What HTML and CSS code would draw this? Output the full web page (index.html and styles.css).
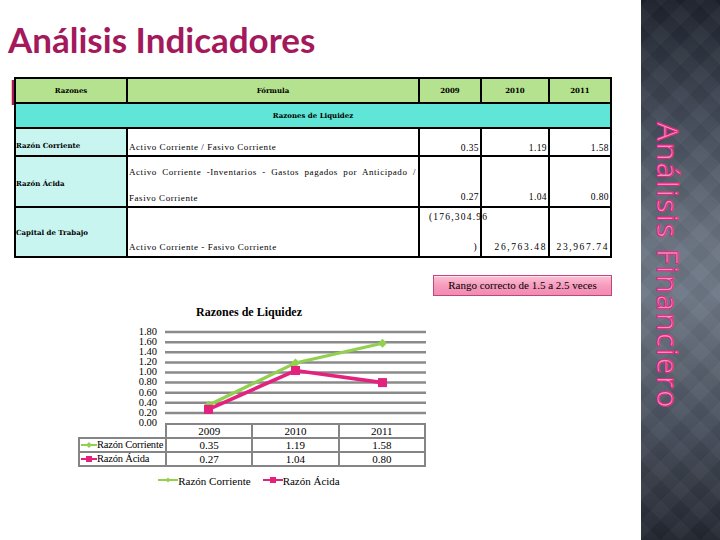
FILE: index.html
```html
<!DOCTYPE html>
<html lang="es">
<head>
<meta charset="utf-8">
<title>Análisis Indicadores Financieros</title>
<link rel="stylesheet" href="styles.css">
</head>
<body>
<div class="slide">
  <main class="content">
    <h1 class="title">Análisis Indicadores <span class="line2">Financieros</span></h1>
    <div class="table-wrap">
      <table class="ratios">
        <colgroup>
          <col class="c-name"><col class="c-formula"><col class="c-y1"><col class="c-y2"><col class="c-y3">
        </colgroup>
        <tr class="head"><th>Razones</th><th>Fórmula</th><th>2009</th><th>2010</th><th>2011</th></tr>
        <tr class="section"><th colspan="5">Razones de Liquidez</th></tr>
        <tr class="r1">
          <td class="name">Razón Corriente</td>
          <td class="formula">Activo Corriente / Fasivo Corriente</td>
          <td class="num">0.35</td><td class="num">1.19</td><td class="num">1.58</td>
        </tr>
        <tr class="r2">
          <td class="name">Razón Ácida</td>
          <td class="formula"><div class="just">Activo Corriente -Inventarios - Gastos pagados por Anticipado /</div><div class="second">Fasivo Corriente</div></td>
          <td class="num">0.27</td><td class="num">1.04</td><td class="num">0.80</td>
        </tr>
        <tr class="r3">
          <td class="name">Capital de Trabajo</td>
          <td class="formula">Activo Corriente - Fasivo Corriente</td>
          <td class="num split"><div class="neg">(176,304.96</div><div class="close">)</div></td>
          <td class="num wide">26,763.48</td><td class="num wide">23,967.74</td>
        </tr>
      </table>
    </div>
    <div class="note-row"><div class="note">Rango correcto de 1.5 a 2.5 veces</div></div>
    <section class="chart">
      <div class="chart-title">Razones de Liquidez</div>
      <div class="plot-row">
        <div class="ylabels">
          <span>1.80</span><span>1.60</span><span>1.40</span><span>1.20</span><span>1.00</span>
          <span>0.80</span><span>0.60</span><span>0.40</span><span>0.20</span><span>0.00</span>
        </div>
        <svg class="plot" width="261" height="96" viewBox="0 0 261 96">
          <g stroke="#8a8a8a" stroke-width="2.5">
            <line x1="0" y1="5.1" x2="261" y2="5.1"/>
            <line x1="0" y1="15.2" x2="261" y2="15.2"/>
            <line x1="0" y1="25.3" x2="261" y2="25.3"/>
            <line x1="0" y1="35.4" x2="261" y2="35.4"/>
            <line x1="0" y1="45.5" x2="261" y2="45.5"/>
            <line x1="0" y1="55.6" x2="261" y2="55.6"/>
            <line x1="0" y1="65.7" x2="261" y2="65.7"/>
            <line x1="0" y1="75.8" x2="261" y2="75.8"/>
            <line x1="0" y1="85.9" x2="261" y2="85.9"/>
          </g>
          <polyline points="43.5,78.3 130.5,35.9 217.5,16.2" fill="none" stroke="#92d050" stroke-width="3.2"/>
          <g fill="#92d050">
            <path d="M43.5 73.8 L48 78.3 L43.5 82.8 L39 78.3Z"/>
            <path d="M130.5 31.4 L135 35.9 L130.5 40.4 L126 35.9Z"/>
            <path d="M217.5 11.7 L222 16.2 L217.5 20.7 L213 16.2Z"/>
          </g>
          <polyline points="43.5,82.4 130.5,43.5 217.5,55.6" fill="none" stroke="#e3227d" stroke-width="3.6"/>
          <g fill="#e3227d">
            <rect x="39" y="77.9" width="9" height="9"/>
            <rect x="126" y="39" width="9" height="9"/>
            <rect x="213" y="51.1" width="9" height="9"/>
          </g>
        </svg>
      </div>
      <table class="data">
        <colgroup><col class="d-name"><col><col><col></colgroup>
        <tr class="years"><td class="blank"></td><td>2009</td><td>2010</td><td>2011</td></tr>
        <tr>
          <td class="series"><svg class="key" width="16" height="8" viewBox="0 0 16 8"><line x1="0" y1="4" x2="16" y2="4" stroke="#92d050" stroke-width="2"/><path d="M8 1 L11 4 L8 7 L5 4Z" fill="#92d050"/></svg>Razón Corriente</td>
          <td>0.35</td><td>1.19</td><td>1.58</td>
        </tr>
        <tr>
          <td class="series"><svg class="key" width="16" height="8" viewBox="0 0 16 8"><line x1="0" y1="4" x2="16" y2="4" stroke="#e3227d" stroke-width="2"/><rect x="5" y="1" width="6" height="6" fill="#e3227d"/></svg>Razón Ácida</td>
          <td>0.27</td><td>1.04</td><td>0.80</td>
        </tr>
      </table>
      <div class="legend">
        <span class="item"><svg class="key" width="20" height="8" viewBox="0 0 20 8"><line x1="0" y1="4" x2="20" y2="4" stroke="#92d050" stroke-width="2"/><path d="M10 1.5 L12.5 4 L10 6.5 L7.5 4Z" fill="#92d050"/></svg>Razón Corriente</span>
        <span class="item"><svg class="key" width="20" height="8" viewBox="0 0 20 8"><line x1="0" y1="4" x2="20" y2="4" stroke="#e3227d" stroke-width="2"/><rect x="7" y="1" width="6" height="6" fill="#e3227d"/></svg>Razón Ácida</span>
      </div>
    </section>
  </main>
  <aside class="side"><span class="side-title">Análisis Financiero</span></aside>
</div>
</body>
</html>
```

FILE: styles.css
```css
html, body {
  margin: 0;
  padding: 0;
  background: #ffffff;
}

.slide {
  display: flex;
  width: 720px;
  height: 540px;
  overflow: hidden;
}

.content {
  width: 641px;
  flex: none;
  padding-top: 16px;
  box-sizing: border-box;
}

.title {
  margin: 0;
  padding-left: 8px;
  width: 330px;
  height: 94px;
  font-family: Lato, "Open Sans", sans-serif;
  font-weight: 700;
  font-size: 35px;
  line-height: 47px;
  color: #a3195b;
}

.title .line2 {
  display: block;
  margin-top: 5px;
  margin-left: 1px;
}

.table-wrap {
  position: relative;
  margin: -33px 0 0 14px;
  width: 596px;
}

.ratios {
  border-collapse: collapse;
  table-layout: fixed;
  width: 596px;
  background: #ffffff;
}

.c-name { width: 112px; }
.c-formula { width: 292px; }
.c-y1 { width: 62px; }
.c-y2 { width: 68px; }
.c-y3 { width: 62px; }

.ratios th,
.ratios td {
  border: 2px solid #000000;
  padding: 0;
  vertical-align: top;
}

.ratios th {
  font-family: "DejaVu Serif", serif;
  font-weight: 700;
  font-size: 7px;
  line-height: 10px;
  color: #000000;
  text-align: center;
  vertical-align: middle;
}

.head { height: 25px; }
.head th { background: #b5e28e; }
.section { height: 25px; }
.section th { background: #5fe6d7; }

.r1 { height: 28px; }
.r2 { height: 51px; }
.r3 { height: 50px; }

.name {
  background: #c9f5f0;
  font-family: "DejaVu Serif", serif;
  font-weight: 700;
  font-size: 7px;
  line-height: 10px;
  white-space: nowrap;
}

.formula {
  font-family: "Liberation Serif", "Times New Roman", serif;
  font-size: 9px;
  line-height: 10px;
  letter-spacing: 0.55px;
  padding-left: 1px !important;
  white-space: nowrap;
}

.num {
  font-family: "Liberation Serif", "Times New Roman", serif;
  font-size: 9.5px;
  line-height: 10px;
  letter-spacing: 0.4px;
  text-align: right;
  padding-right: 1px !important;
  white-space: nowrap;
}

.num.wide { letter-spacing: 1.6px; }

.r1 .name { padding-top: 12px; }
.r1 .formula { padding-top: 13px; }
.r1 .num { padding-top: 14px; }

.r2 .name { padding-top: 22px; }
.r2 .formula { padding-top: 10px; padding-right: 2px; }
.r2 .num { padding-top: 35px; }

.just {
  text-align: justify;
  text-align-last: justify;
  white-space: normal;
  word-spacing: 2px;
}

.second { margin-top: 16px; }

.r3 .name { padding-top: 20px; }
.r3 .formula { padding-top: 34px; }
.r3 .num { padding-top: 34px; }
.r3 .num.split { padding-top: 4px; }

.neg {
  text-align: left;
  padding-left: 9px;
  letter-spacing: 1.2px;
}

.close {
  margin-top: 20px;
  padding-right: 2px;
}

.note-row {
  display: flex;
  justify-content: flex-end;
  padding-right: 29px;
  margin-top: 17px;
}

.note {
  width: 177px;
  height: 19px;
  border: 1px solid #c0457c;
  background: linear-gradient(to bottom, #fcc0d4 0%, #f69cbd 50%, #f28ab1 100%);
  font-family: "Liberation Serif", "Times New Roman", serif;
  font-size: 11px;
  line-height: 19px;
  text-align: center;
  color: #000000;
  box-shadow: inset 0 1px 0 rgba(255, 255, 255, 0.6);
}

.chart {
  margin-left: 78px;
  margin-top: 9px;
  width: 348px;
  font-family: "Liberation Serif", "Times New Roman", serif;
  color: #000000;
}

.chart-title {
  font-weight: 700;
  font-size: 12px;
  line-height: 14px;
  text-align: center;
  padding-right: 6px;
}

.plot-row {
  display: grid;
  grid-template-columns: 87px 261px;
  margin-top: 8px;
  height: 96px;
}

.ylabels {
  display: flex;
  flex-direction: column;
  align-items: flex-end;
  padding-right: 8px;
  height: 96px;
}

.ylabels span {
  display: block;
  height: 10.1px;
  line-height: 10.1px;
  font-size: 10.5px;
}

.plot {
  display: block;
  overflow: visible;
}

.data {
  border-collapse: collapse;
  table-layout: fixed;
  width: 348px;
  font-size: 11px;
}

.d-name { width: 87px; }

.data td {
  border: 2px solid #858585;
  padding: 0;
  height: 12px;
  line-height: 12px;
  text-align: center;
  white-space: nowrap;
}

.data .years td { height: 12px; }

.data td.blank {
  border: none;
}

.data td.series {
  text-align: left;
  padding-left: 1px;
  font-size: 10.5px;
  letter-spacing: -0.2px;
  overflow: hidden;
}

.key {
  display: inline-block;
  vertical-align: middle;
  margin-top: -2px;
}

.legend {
  display: flex;
  justify-content: center;
  gap: 12px;
  margin-top: 7px;
  font-size: 11px;
  line-height: 14px;
  padding-right: 6px;
}

.legend .item {
  display: flex;
  align-items: center;
}

.side {
  width: 79px;
  height: 540px;
  flex: none;
  display: flex;
  align-items: center;
  justify-content: flex-start;
  padding-left: 10px;
  padding-bottom: 8px;
  box-sizing: border-box;
  background:
    repeating-linear-gradient(45deg, rgba(255, 255, 255, 0.025) 0 14px, rgba(0, 0, 0, 0.025) 14px 28px),
    repeating-linear-gradient(-45deg, rgba(255, 255, 255, 0.025) 0 14px, rgba(0, 0, 0, 0.025) 14px 28px),
    linear-gradient(to bottom, #1d222c 0%, #3c4350 18%, #6a7381 45%, #6e7785 55%, #474e5b 80%, #22262f 100%);
}

.side-title {
  writing-mode: vertical-rl;
  font-family: "Open Sans", "DejaVu Sans", sans-serif;
  font-weight: 400;
  font-size: 30px;
  line-height: 34px;
  letter-spacing: 1.5px;
  color: #f290c0;
  -webkit-text-stroke: 1px #e2237f;
  white-space: nowrap;
}
```
